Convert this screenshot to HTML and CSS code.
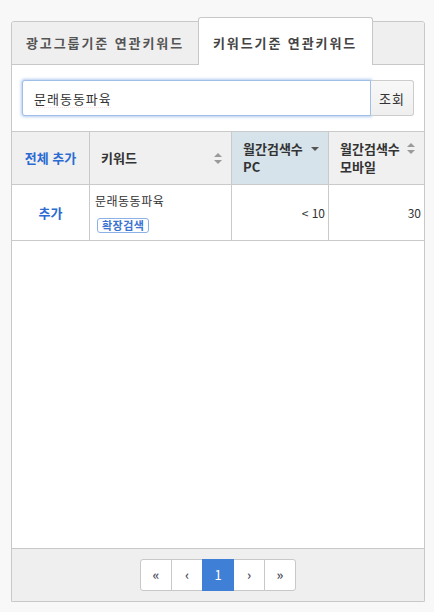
FILE: index.html
```html
<!DOCTYPE html>
<html lang="ko">
<head>
  <meta charset="UTF-8" />
  <title>연관키워드</title>
  <link rel="stylesheet" href="styles.css">
</head>
<body>

  <div class="panel">
    <div class="tabs">
      <div class="tab">광고그룹기준 연관키워드</div>
      <div class="tab active">키워드기준 연관키워드</div>
    </div>

    <div class="panel-body">
      <div class="search">
        <input type="text" class="search-input" value="문래동동파육" />
        <button class="search-btn">조회</button>
      </div>

      <table class="kw-table">
        <colgroup>
          <col class="c-add" />
          <col class="c-kw" />
          <col class="c-pc" />
          <col class="c-mo" />
        </colgroup>
        <thead>
          <tr>
            <th class="th-add"><a class="link">전체 추가</a></th>
            <th>
              <div class="th-inner middle">
                <span>키워드</span>
                <svg class="sort" width="8" height="11" viewBox="0 0 8 11"><path d="M4 0L8 4H0z M4 11L0 7H8z" fill="#9a9a9a"/></svg>
              </div>
            </th>
            <th class="sorted">
              <div class="th-inner">
                <span>월간검색수<br>PC</span>
                <svg class="sort" width="8" height="11" viewBox="0 0 8 11"><path d="M0 4H8L4 8z" fill="#555"/></svg>
              </div>
            </th>
            <th>
              <div class="th-inner">
                <span>월간검색수<br>모바일</span>
                <svg class="sort" width="8" height="11" viewBox="0 0 8 11"><path d="M4 0L8 4H0z M4 11L0 7H8z" fill="#9a9a9a"/></svg>
              </div>
            </th>
          </tr>
        </thead>
        <tbody>
          <tr>
            <td class="td-add"><a class="link">추가</a></td>
            <td class="td-kw">
              <div>문래동동파육</div>
              <span class="badge">확장검색</span>
            </td>
            <td class="num">&lt; 10</td>
            <td class="num">30</td>
          </tr>
        </tbody>
      </table>
    </div>

    <div class="panel-foot">
      <div class="pager">
        <a class="page">«</a>
        <a class="page">‹</a>
        <a class="page current">1</a>
        <a class="page">›</a>
        <a class="page">»</a>
      </div>
    </div>
  </div>

</body>
</html>
```

FILE: styles.css
```css
body {
  margin: 0;
  background: #f8f8f8;
  font-family: "Noto Sans CJK KR", "Noto Sans", sans-serif;
  color: #333;
}

.panel {
  margin: 21px 0 0 11px;
  width: 414px;
  height: 581px;
  box-sizing: border-box;
  border: 1px solid #c8c8c8;
  border-radius: 3px;
  background: #fff;
  display: flex;
  flex-direction: column;
  box-shadow: 0 1px 0 #c8c8c8;
}

.tabs {
  display: flex;
  align-items: flex-end;
  height: 42px;
  background: #efefef;
  border-bottom: 1px solid #c8c8c8;
  border-radius: 3px 3px 0 0;
}

.tab {
  height: 42px;
  line-height: 42px;
  padding: 0 0 0 14px;
  width: 186px;
  box-sizing: border-box;
  font-size: 13px;
  font-weight: bold;
  letter-spacing: 1.9px;
  color: #555;
  white-space: nowrap;
}

.tab.active {
  width: 175px;
  height: 48px;
  margin-bottom: -1px;
  padding-top: 4px;
  background: #fff;
  border: 1px solid #c8c8c8;
  border-bottom: none;
  border-radius: 3px 3px 0 0;
  color: #444;
}

.panel-body {
  flex: 1;
  padding-top: 15px;
}

.search {
  display: flex;
  margin: 0 10px;
  height: 36px;
}

.search-input {
  flex: 1;
  min-width: 0;
  box-sizing: border-box;
  height: 36px;
  margin: 0;
  padding: 0 11px;
  border: 1px solid #9fbfe9;
  border-radius: 3px 0 0 3px;
  box-shadow: 0 0 3px 1px rgba(120, 160, 225, 0.55);
  font-family: inherit;
  font-size: 13px;
  letter-spacing: 1px;
  color: #333;
  outline: none;
  text-decoration: underline dotted #e33;
  text-underline-offset: 4px;
}

.search-btn {
  width: 43px;
  height: 36px;
  margin: 0;
  padding: 0;
  border: 1px solid #ccc;
  border-left: none;
  border-radius: 0 3px 3px 0;
  background: linear-gradient(#f8f8f8, #efefef);
  font-family: inherit;
  font-size: 13px;
  letter-spacing: 1px;
  color: #333;
}

.kw-table {
  margin-top: 15px;
  width: 100%;
  table-layout: fixed;
  border-collapse: separate;
  border-spacing: 0;
}

.c-add { width: 78px; }
.c-kw { width: 142px; }
.c-pc { width: 97px; }
.c-mo { width: 95px; }

.kw-table th,
.kw-table td {
  border-bottom: 1px solid #cacaca;
  border-right: 1px solid #cacaca;
}

.kw-table th:last-child,
.kw-table td:last-child {
  border-right: none;
}

.kw-table th {
  height: 54px;
  box-sizing: border-box;
  border-top: 1px solid #cacaca;
  background: #f0f0f0;
  padding: 0 9px 0 11px;
  font-size: 13px;
  font-weight: bold;
  line-height: 18px;
  text-align: left;
  color: #333;
}

.kw-table th.sorted {
  background: #d7e3eb;
}

.kw-table th.th-add {
  padding: 0;
  text-align: center;
}

.th-inner {
  display: flex;
  justify-content: space-between;
  align-items: flex-start;
}

.th-inner.middle {
  align-items: center;
}

.th-inner .sort {
  flex: none;
  margin-top: 3px;
}

.th-inner.middle .sort {
  margin-top: 0;
}

.link {
  color: #2b6bd2;
  font-weight: bold;
  font-size: 13px;
  cursor: pointer;
}

.kw-table td {
  padding: 8px 5px 7px;
  font-size: 12px;
  line-height: 16px;
  vertical-align: middle;
}

.kw-table td.td-kw {
  letter-spacing: 0.5px;
}

.kw-table td.td-add {
  text-align: center;
}

.badge {
  display: inline-block;
  margin: 9px 0 0 2px;
  height: 15px;
  box-sizing: border-box;
  padding: 0 4px;
  border: 1px solid #8cb1e6;
  border-radius: 3px;
  font-size: 11px;
  font-weight: bold;
  line-height: 13px;
  letter-spacing: 0.5px;
  color: #3a74d0;
}

.kw-table td.num {
  text-align: right;
  padding-right: 3px;
  font-size: 12px;
}

.panel-foot {
  height: 53px;
  box-sizing: border-box;
  border-top: 1px solid #c8c8c8;
  background: #efefef;
  padding-top: 10px;
  display: flex;
  justify-content: center;
}

.pager {
  display: flex;
  height: 32px;
}

.page {
  width: 32px;
  height: 32px;
  box-sizing: border-box;
  border: 1px solid #c8c8c8;
  margin-left: -1px;
  background: #fff;
  text-align: center;
  line-height: 29px;
  font-size: 13px;
  font-weight: bold;
  color: #556;
}

.page:first-child {
  margin-left: 0;
  border-radius: 3px 0 0 3px;
}

.page:last-child {
  border-radius: 0 3px 3px 0;
}

.page.current {
  background: #3f7fd6;
  border-color: #3f7fd6;
  color: #fff;
  font-weight: normal;
  position: relative;
}
```
